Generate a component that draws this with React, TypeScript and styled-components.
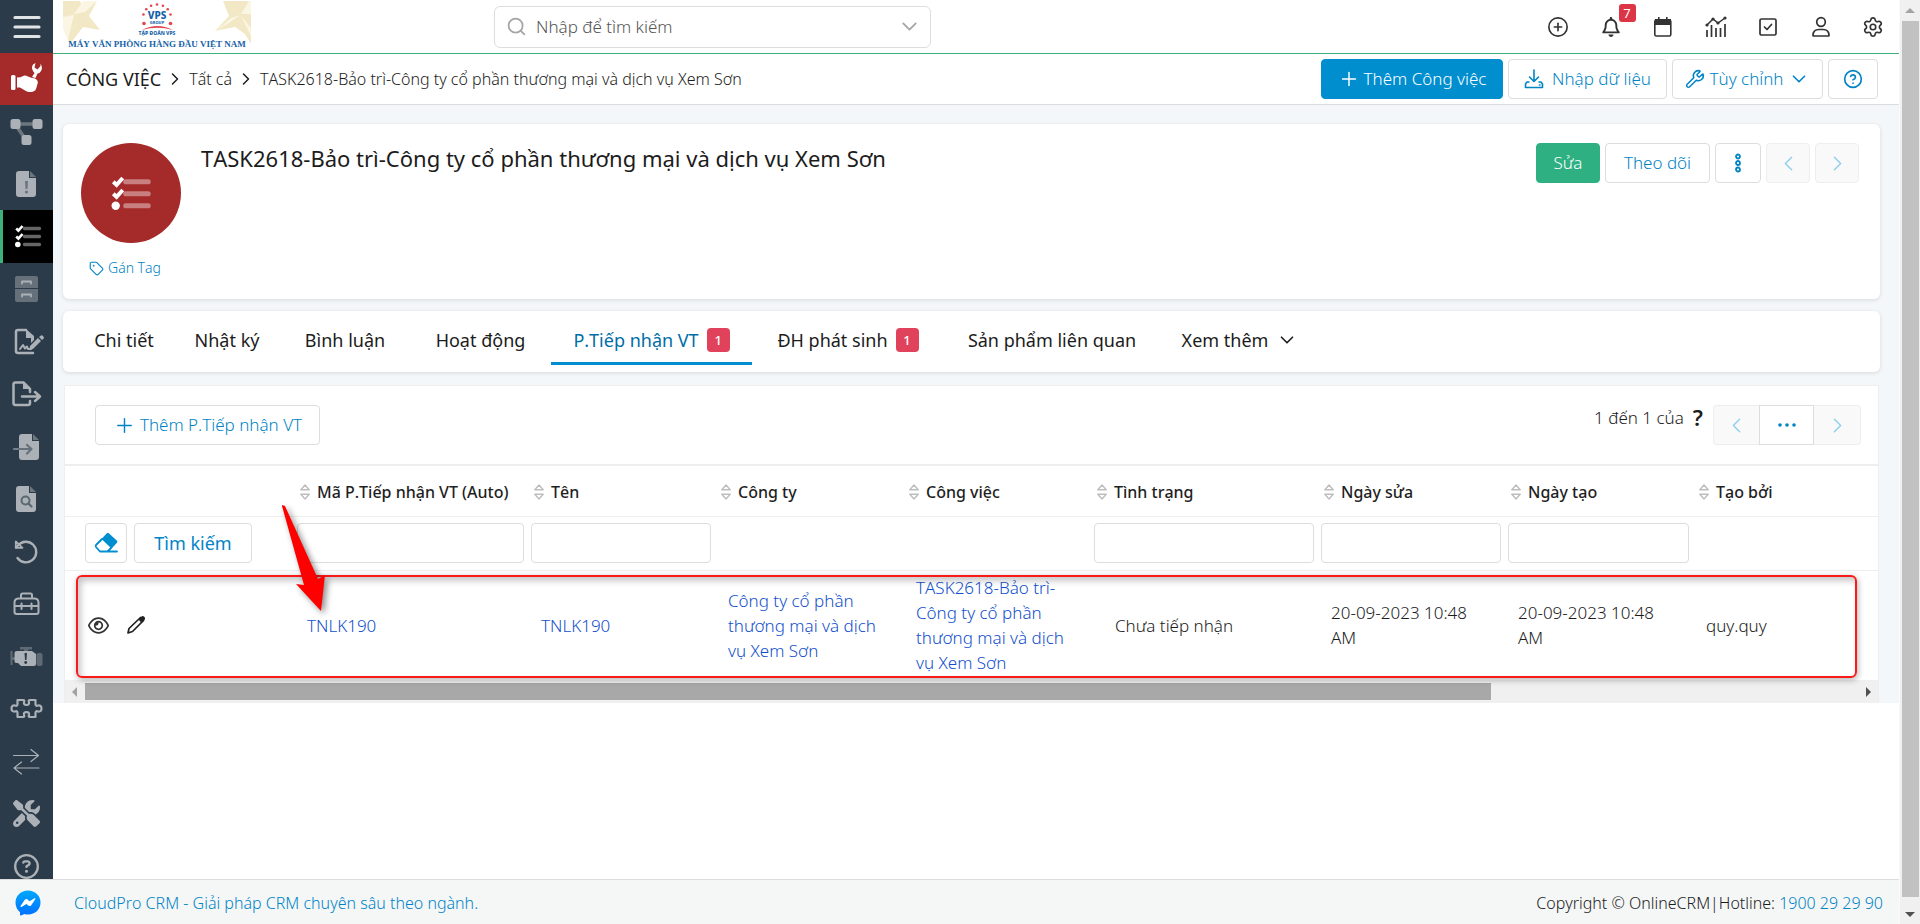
import React from "react";
import styled, { createGlobalStyle, css } from "styled-components";
import {
  ChevronDown,
  ChevronLeft,
  ChevronRight,
  CircleHelp,
  CirclePlus,
  Plus,
  Search,
  Settings,
  Tag,
  Wrench,
} from "lucide-react";
import { FaRegBell, FaRegCircleQuestion, FaRegEye, FaScrewdriverWrench } from "react-icons/fa6";

const color = {
  navy: "#2c3b49",
  red: "#a52a2a",
  green: "#3cb179",
  blue: "#008ecf",
  deepBlue: "#0084c6",
  link: "#1150cc",
  text: "#1c1c1c",
  line: "#dddddd",
  soft: "#eeeeee",
  canvas: "#f3f7fa",
  badge: "#e0425b",
};

const GlobalStyle = createGlobalStyle`
  *, *::before, *::after { box-sizing: border-box; }
  body {
    margin: 0;
    background: #fff;
    color: ${color.text};
    font: 300 16px/24px "Noto Sans", "Open Sans", sans-serif;
    font-kerning: none;
  }
  button, input { font: inherit; font-kerning: none; color: inherit; }
  button { cursor: pointer; }
  a { color: ${color.deepBlue}; text-decoration: none; }
  svg { display: block; flex: none; }
`;

/* ---------- Shell ---------- */

const Shell = styled.div`
  display: grid;
  grid-template: 1fr 45px / 53px 1fr 21px;
  height: 100vh;
  overflow: hidden;
`;

const Sidebar = styled.nav`
  background: ${color.navy};
  overflow: hidden;
  min-height: 0;
`;

const MenuToggle = styled.button`
  display: flex;
  align-items: center;
  justify-content: center;
  width: 100%;
  height: 53px;
  padding: 0;
  border: 0;
  background: none;
`;

const ModuleLink = styled.a`
  display: block;
  height: 52px;
  background: ${color.red};
  color: #fff;
`;

const NavList = styled.ul`
  margin: 0;
  padding: 0;
  list-style: none;
`;

const NavItem = styled.li`
  height: 53px;
  &:nth-child(even) {
    height: 52px;
  }
`;

const NavLink = styled.a<{ $active?: boolean }>`
  display: block;
  height: 100%;
  color: #abb1b6;
  ${(p) =>
    p.$active &&
    css`
      background: #000;
      color: #fff;
      box-shadow: inset 3px 0 ${color.green};
    `}
`;

const Main = styled.main`
  min-width: 0;
  min-height: 0;
  overflow: hidden;
`;

const ScrollRail = styled.div`
  grid-row: 1 / 3;
  grid-column: 3;
  display: flex;
  flex-direction: column;
  align-items: center;
  background: #f0f0f0;
  border-left: 1px solid #fafafa;
`;

const RailEnd = styled.span`
  display: flex;
  align-items: center;
  justify-content: center;
  height: 21px;
`;

const RailThumb = styled.span`
  width: 17px;
  flex: 1;
  margin-bottom: 6px;
  background: #c1c1c1;
`;

/* ---------- Top bar ---------- */

const TopBar = styled.header`
  display: flex;
  align-items: center;
  justify-content: space-between;
  height: 54px;
  padding: 0 14px 0 10px;
  border-bottom: 1px solid ${color.green};
`;

const LogoLink = styled.a`
  align-self: flex-start;
  width: 431px;
`;

const SearchBox = styled.label`
  display: flex;
  align-items: center;
  width: 437px;
  height: 42px;
  padding: 0 8px 0 11px;
  border: 1px solid ${color.line};
  border-radius: 6px;
  color: #a5a5a5;
`;

const SearchInput = styled.input`
  flex: 1;
  min-width: 0;
  margin-left: 9px;
  padding: 0;
  border: 0;
  outline: 0;
  background: none;
  font-size: 17px;
  &::placeholder {
    color: #555;
    opacity: 1;
  }
`;

const TopActions = styled.div`
  display: flex;
  justify-content: space-between;
  width: 339px;
  margin-left: auto;
`;

const IconButton = styled.button`
  position: relative;
  display: flex;
  align-items: center;
  justify-content: center;
  width: 24px;
  height: 24px;
  padding: 0;
  border: 0;
  background: none;
  color: #333;
`;

const Bubble = styled.span`
  position: absolute;
  left: 20px;
  bottom: 17px;
  width: 17px;
  height: 18px;
  border-radius: 3px;
  background: #dc3545;
  color: #fff;
  font-size: 13px;
  font-weight: 400;
  line-height: 18px;
`;

/* ---------- Breadcrumb bar ---------- */

const CrumbBar = styled.div`
  display: flex;
  align-items: center;
  justify-content: space-between;
  height: 51px;
  padding: 0 21px 0 13px;
  border-bottom: 1px solid ${color.line};
`;

const Crumbs = styled.nav`
  display: flex;
  align-items: center;
  gap: 4px;
`;

const CrumbRoot = styled.a`
  color: ${color.text};
  font-size: 18px;
  font-weight: 400;
`;

const Crumb = styled.a`
  color: ${color.text};
`;

const ButtonRow = styled.div`
  display: flex;
  gap: 5px;
`;

type Tone = "plain" | "blue" | "green";

const Button = styled.button<{ $tone?: Tone; $width?: number; $strong?: boolean; $gap?: number }>`
  display: flex;
  align-items: center;
  justify-content: center;
  gap: ${(p) => p.$gap ?? 4}px;
  width: ${(p) => (p.$width ? `${p.$width}px` : "auto")};
  height: 40px;
  padding: 0;
  border: 1px solid ${color.line};
  border-radius: 4px;
  background: #fff;
  color: ${color.deepBlue};
  font-size: ${(p) => (p.$strong ? 18 : 17)}px;
  font-weight: ${(p) => (p.$strong ? 400 : 300)};
  white-space: nowrap;
  ${(p) =>
    p.$tone === "blue" &&
    css`
      border-color: ${color.blue};
      background: ${color.blue};
      color: #fff;
    `}
  ${(p) =>
    p.$tone === "green" &&
    css`
      border-color: #2fb083;
      background: #2fb083;
      color: #fff;
    `}
  &:disabled {
    border-color: ${color.soft};
    background: #f9f9f9;
    color: #8fd0ee;
    cursor: default;
  }
`;

/* ---------- Record ---------- */

const Canvas = styled.div`
  padding: 19px 19px 0 10px;
  background: ${color.canvas};
`;

const Card = styled.section`
  border-radius: 6px;
  background: #fff;
  box-shadow: 0 1px 4px rgba(0, 0, 0, 0.12);
`;

const RecordCard = styled(Card)`
  display: flex;
  align-items: flex-start;
  gap: 20px;
  height: 175px;
  padding: 19px 21px 0 18px;
`;

const RecordMark = styled.div`
  display: flex;
  flex-direction: column;
  gap: 13px;
`;

const Avatar = styled.div`
  display: flex;
  align-items: center;
  justify-content: center;
  width: 100px;
  height: 100px;
  border-radius: 50%;
  background: ${color.red};
  color: #fff;
`;

const TagLink = styled.a`
  display: flex;
  align-items: center;
  gap: 4px;
  padding-left: 8px;
  font-size: 14px;
`;

const RecordTitle = styled.h1`
  flex: 1;
  margin: 0;
  font-size: 22px;
  font-weight: 400;
  line-height: 30px;
`;

const TabCard = styled(Card)`
  display: flex;
  height: 61px;
  margin-top: 12px;
  padding-left: 11px;
`;

const Tab = styled.a<{ $width: number; $active?: boolean }>`
  display: flex;
  align-items: center;
  justify-content: center;
  gap: 8px;
  width: ${(p) => p.$width}px;
  height: 54px;
  padding-top: 6px;
  border-bottom: 3px solid ${(p) => (p.$active ? color.blue : "transparent")};
  color: ${(p) => (p.$active ? "#006ea6" : color.text)};
  font-size: 18px;
  font-weight: 400;
  white-space: nowrap;
`;

const CountBadge = styled.span`
  width: 23px;
  border-radius: 4px;
  background: ${color.badge};
  color: #fff;
  font-size: 13px;
  font-weight: 500;
  line-height: 24px;
  text-align: center;
`;

/* ---------- Related list ---------- */

const Panel = styled.section`
  margin: 13px 1px 0;
  border: 1px solid ${color.soft};
  border-bottom: 0;
  background: #fff;
`;

const PanelBar = styled.div`
  display: flex;
  justify-content: space-between;
  height: 78px;
  padding: 19px 17px 0 30px;
`;

const Pager = styled.div`
  display: flex;
  align-items: flex-start;
`;

const PagerText = styled.span`
  padding: 1px 9px 0 0;
  font-size: 17px;
`;

const PagerTotal = styled.a`
  margin-right: 10px;
  color: ${color.text};
  font-size: 22px;
  font-weight: 600;
`;

const PagerButton = styled(Button)`
  border-radius: 0;
  &:first-child {
    border-radius: 4px 0 0 4px;
    border-right: 0;
  }
  &:last-child {
    border-radius: 0 4px 4px 0;
    border-left: 0;
  }
`;

const PagerGroup = styled.div`
  display: flex;
`;

const TableArea = styled.div`
  position: relative;
`;

const Table = styled.table`
  width: 100%;
  table-layout: fixed;
  border-collapse: collapse;
  border-top: 2px solid ${color.soft};
`;

const Col = styled.col<{ $width?: number }>`
  width: ${(p) => (p.$width ? `${p.$width}px` : "auto")};
`;

const HeadCell = styled.th`
  height: 51px;
  padding: 2px 0 0 6px;
  border-bottom: 1px solid ${color.soft};
  text-align: left;
  font-weight: 500;
  white-space: nowrap;
  color: #1f1f1f;
`;

const SortLabel = styled.span`
  display: flex;
  align-items: center;
  gap: 7px;
`;

const FilterCell = styled.td`
  height: 54px;
  padding: 0 4px 0 3px;
  border-bottom: 1px solid ${color.soft};
`;

const FilterInput = styled.input`
  display: block;
  width: 100%;
  height: 40px;
  padding: 0 10px;
  border: 1px solid ${color.line};
  border-radius: 4px;
  outline: 0;
`;

const FilterActions = styled.div`
  display: flex;
  gap: 7px;
  padding-left: 17px;
`;

const Cell = styled.td<{ $indent?: boolean }>`
  height: 110px;
  padding: 0 20px 0 ${(p) => (p.$indent ? 24 : 13)}px;
  font-size: 17px;
  line-height: 25px;
`;

const RowActions = styled.div`
  display: flex;
  gap: 14px;
  padding-left: 8px;
`;

const CellLink = styled.a`
  color: ${color.link};
`;

const ScrollTrack = styled.div`
  display: flex;
  align-items: center;
  justify-content: space-between;
  height: 23px;
  padding: 0 5px;
  background: #f0f0f0;
`;

const TrackThumb = styled.span`
  width: 78%;
  height: 17px;
  margin-right: auto;
  margin-left: 5px;
  background: #a8a8a8;
`;

const Highlight = styled.div`
  position: absolute;
  inset: 111px 21px 2px 11px;
  border: 2px solid #fa1a1a;
  border-radius: 6px;
  box-shadow: 1px 2px 6px rgba(0, 0, 0, 0.3), inset 3px 4px 6px rgba(0, 0, 0, 0.22);
  pointer-events: none;
`;

const Arrow = styled.svg`
  position: absolute;
  top: 36px;
  left: 211px;
  overflow: visible;
  filter: drop-shadow(3px 3px 3px rgba(0, 0, 0, 0.45));
  pointer-events: none;
`;

/* ---------- Footer ---------- */

const Footer = styled.footer`
  grid-row: 2;
  grid-column: 1 / 3;
  display: flex;
  align-items: center;
  justify-content: space-between;
  padding: 1px 16px 0 15px;
  border-top: 1px solid ${color.line};
  background: #f5f7f7;
`;

const FooterLead = styled.div`
  display: flex;
  align-items: center;
  gap: 33px;
`;

/* ---------- Drawings ---------- */

const NavIcon = ({ children }: { children: React.ReactNode }) => (
  <svg width="53" height="52" viewBox="0 0 53 52" fill="currentColor" aria-hidden="true">
    {children}
  </svg>
);

const line = (width: number) => ({
  fill: "none",
  stroke: "currentColor",
  strokeWidth: width,
  strokeLinecap: "round" as const,
  strokeLinejoin: "round" as const,
});

const ServiceIcon = () => (
  <NavIcon>
    <rect x="11" y="22" width="4.500" height="15" rx="1.500" />
    <path d="M17 24.500Q21 24.500 23 23Q25 22 28 23.500L32 25Q35 24.500 37 27Q38.500 29 37.500 31L36 36Q35 38.500 31 39Q28 39.500 25 37.500L20 34.500H17Z" />
    <path d="M32 24L34.500 20Q30.500 15.500 33 11.500L35.500 10L34.500 14.500L37.500 16.500L40.500 13V10.500Q43 15 41 18Q39.500 20.500 37.500 20.500L35.500 25Z" />
  </NavIcon>
);

const NetworkIcon = () => (
  <NavIcon>
    <path d="M15 19 H38 M15 19 L26 35" {...line(3.5)} opacity=".5" />
    <rect x="10.500" y="14" width="10" height="10" rx="2.500" />
    <rect x="32.500" y="14" width="10" height="10" rx="2.500" />
    <rect x="21.500" y="30" width="10" height="10" rx="2.500" />
  </NavIcon>
);

const FileShape = ({ x = 16, y = 13 }: { x?: number; y?: number }) => (
  <g transform={`translate(${x} ${y})`}>
    <path d="M3 0H13V7H20V23A3 3 0 0 1 17 26H3A3 3 0 0 1 0 23V3A3 3 0 0 1 3 0Z" />
    <path d="M14 0L20 6H14Z" opacity=".5" />
  </g>
);

const FileAlertIcon = () => (
  <NavIcon>
    <FileShape />
    <path d="M25 23H28L27.500 31H25.500Z" fill="#6b7680" />
    <circle cx="26.500" cy="34" r="1.600" fill="#6b7680" />
  </NavIcon>
);

const TaskMarks = ({ dim = 0.4 }: { dim?: number }) => (
  <>
    <path d="M9.500 4.500H24.500M9.500 12.500H24.500M9.500 20.500H24.500" fill="none" stroke="currentColor" strokeWidth="3.400" strokeLinecap="round" opacity={dim} />
    <path d="M1.200 4.500L3.400 6.600L7.500 2M1.200 12.500L3.400 14.600L7.500 10" fill="none" stroke="currentColor" strokeWidth="2.600" />
    <circle cx="2.800" cy="20.500" r="2.800" />
  </>
);

const TasksIcon = () => (
  <NavIcon>
    <g transform="translate(15 14)">
      <TaskMarks />
    </g>
  </NavIcon>
);

const DrawerIcon = () => (
  <NavIcon>
    <path d="M17 13H36A2 2 0 0 1 38 15V25H15V15A2 2 0 0 1 17 13ZM15 26H38V37A2 2 0 0 1 36 39H17A2 2 0 0 1 15 37Z" opacity=".45" />
    <path d="M22 20.500V18.500H31V20.500M22 33.500V31.500H31V33.500" {...line(1.8)} />
  </NavIcon>
);

const SignIcon = () => (
  <NavIcon>
    <path d="M26 15H18A2 2 0 0 0 16 17V36A2 2 0 0 0 18 38H33" {...line(2.5)} />
    <path d="M26 14L34 21V25L31 28V23H26Z" />
    <path d="M20 34L23 30L25 33.500L27 31.500L28 34H31" {...line(2)} />
    <path d="M30 31L38 23L41 26L33 34L29.500 34.500ZM39 22L41 20.500Q42 20 43 21L44 22.500Q44 23.500 42 25Z" />
  </NavIcon>
);

const ExportIcon = () => (
  <NavIcon>
    <path d="M23 14.500H15.500A2 2 0 0 0 13.500 16.500V35A2 2 0 0 0 15.500 37H28A2 2 0 0 0 30 35V33M30 24V21L23.500 14.500" {...line(2.5)} />
    <path d="M23 14V21H31Z" />
    <path d="M22 28.500H39M35 24L40 28.500L35 33" {...line(2.5)} />
  </NavIcon>
);

const ImportIcon = () => (
  <NavIcon>
    <FileShape x={19} y={14} />
    <path d="M14 29H19" {...line(2.2)} opacity=".6" />
    <path d="M19 29H31M27 25L31.500 29L27 33.500" {...line(2.2)} stroke="#66717b" />
  </NavIcon>
);

const FileSearchIcon = () => (
  <NavIcon>
    <FileShape />
    <circle cx="25.500" cy="27.500" r="4" fill="none" stroke="#5b6771" strokeWidth="2" />
    <path d="M28.500 30.500L31.500 33.500" stroke="#5b6771" strokeWidth="2.200" strokeLinecap="round" />
  </NavIcon>
);

const UndoIcon = () => (
  <NavIcon>
    <path d="M17.500 33A10.300 10.300 0 1 0 18 20.500L16 22.500" {...line(2.4)} />
    <path d="M15.800 16.500V22.800H22.500Z" {...line(1.8)} />
  </NavIcon>
);

const ToolboxIcon = () => (
  <NavIcon>
    <path d="M21 20V17A1.500 1.500 0 0 1 22.500 15.500H30.500A1.500 1.500 0 0 1 32 17V20M14.500 28V24A4 4 0 0 1 18 20.500H35A4 4 0 0 1 38.500 24V34A2 2 0 0 1 36.500 36H16.500A2 2 0 0 1 14.500 34V28H38.500M21.500 25.500V31M31.500 25.500V31" {...line(2)} />
  </NavIcon>
);

const EngineIcon = () => (
  <NavIcon>
    <g opacity=".4">
      <path d="M10.500 21H12.500V27H15V30H12.500V35H10.500ZM20 17H32V19.500H28V21H24V19.500H20Z" />
      <rect x="36.500" y="23" width="6" height="13" rx="2" />
    </g>
    <path d="M17 21H32L36 24V34Q36 36 34 36H21L18 33H16Q14.500 33 14.500 31V23Q14.500 21 17 21Z" />
    <path d="M24.500 23H27L26.500 30H25Z" fill={color.navy} />
    <circle cx="25.700" cy="32.500" r="1.400" fill={color.navy} />
  </NavIcon>
);

const PuzzleIcon = () => (
  <NavIcon>
    <path d="M17.500 17H23Q25 17 24 19Q23.500 22 26.500 22Q29.500 22 29 19Q28 17 30 17H35.500V21Q35.500 23.500 38 22.500Q41.500 22 41.500 25.500Q41.500 29 38 28.500Q35.500 27.500 35.500 30V34H30Q28 34 29 32Q29.500 29 26.500 29Q23.500 29 24 32Q25 34 23 34H17.500V30Q17.500 27.500 15 28.500Q11.500 29 11.500 25.500Q11.500 22 15 22.500Q17.500 23.500 17.500 21Z" {...line(2.2)} />
  </NavIcon>
);

const SwapIcon = () => (
  <NavIcon>
    <path d="M13.500 20.500H38.500M31 14.500L38.500 20.500L31 26.500M39 33H14M21.500 27L14 33L21.500 39" {...line(1.2)} />
  </NavIcon>
);

const ToolsIcon = () => (
  <NavIcon>
    <FaScrewdriverWrench x="13" y="12" size={27} />
  </NavIcon>
);

const HelpIcon = () => (
  <NavIcon>
    <FaRegCircleQuestion x="14" y="14" size={25} />
  </NavIcon>
);

const CalendarIcon = () => (
  <svg width="20" height="22" viewBox="0 0 20 22" fill="currentColor">
    <rect x="1.800" y="4" width="16" height="16" rx="1.500" fill="none" stroke="currentColor" strokeWidth="1.600" />
    <path d="M2 3H18V9H2ZM5 1H6.600V4H5ZM13 1H14.600V4H13Z" />
  </svg>
);

const ChartIcon = () => (
  <svg width="22" height="22" viewBox="0 0 22 22" fill="currentColor">
    <path d="M2 9L8 3L13 7L20 2" fill="none" stroke="currentColor" strokeWidth="1.500" />
    <circle cx="2" cy="9" r="1.600" />
    <circle cx="8" cy="3" r="1.600" />
    <circle cx="13" cy="7" r="1.600" />
    <circle cx="20" cy="2" r="1.600" />
    <path d="M2 14V21M6.500 9V21M11 12V21M15.500 12V21M20 8V21" fill="none" stroke="currentColor" strokeWidth="1.700" />
  </svg>
);

const CheckSquareIcon = () => (
  <svg width="20" height="20" viewBox="0 0 20 20" {...line(1.7)}>
    <rect x="2" y="2" width="16" height="16" rx="1.500" />
    <path d="M6.500 10L9 12.500L13.500 7.500" />
  </svg>
);

const UserIcon = () => (
  <svg width="20" height="22" viewBox="0 0 20 22" {...line(1.7)}>
    <circle cx="10" cy="6" r="4.300" />
    <path d="M2 19.500Q2 13.500 8 13.500H12Q18 13.500 18 19.500Q18 20 17.500 20H2.500Q2 20 2 19.500Z" />
  </svg>
);

const ImportDataIcon = () => (
  <svg width="20" height="20" viewBox="0 0 20 20" {...line(1.6)}>
    <path d="M10 1V12M5.500 8L10 12.500L14.500 8M5 13H3L1.500 15V18.500H18.500V15L17 13H15M15.500 16H16" />
  </svg>
);

const MoreVerticalIcon = () => (
  <svg width="8" height="20" viewBox="0 0 8 20" fill="none" stroke="currentColor" strokeWidth="1.800">
    <circle cx="4" cy="3.500" r="2" />
    <circle cx="4" cy="10" r="2" />
    <circle cx="4" cy="16.500" r="2" />
  </svg>
);

const EraserIcon = () => (
  <svg width="24" height="22" viewBox="0 0 24 22" fill={color.blue}>
    <path d="M12.800 1.200Q13.800 .400 14.800 1.200L23 8.800Q23.800 9.800 23 10.800L17.500 16.500L7.500 7Z" />
    <path d="M8 7L2 13Q1.200 14 2 15L6 19.500H23M17.500 15.500L13.500 19.500" {...line(1.8)} stroke={color.blue} />
  </svg>
);

const PencilIcon = () => (
  <svg width="20" height="20" viewBox="0 0 20 20">
    <path d="M2 18L3 13.500L14.500 2.500L17.500 5.500L6.500 16.500Z" fill="none" stroke="#222" strokeWidth="1.700" strokeLinejoin="round" />
    <path d="M12.500 4.500L15.500 1.500Q17 .500 18.500 2Q19.800 3.500 18.500 5L15.500 8Z" fill="#222" />
  </svg>
);

const SortIcon = () => (
  <svg width="10" height="16" viewBox="0 0 10 16" {...line(1.4)} stroke="#bdbdbd">
    <path d="M5 1L9.200 5.800H.800ZM5 15L9.200 10.200H.800Z" />
  </svg>
);

const MessengerIcon = () => (
  <svg width="26" height="26" viewBox="0 0 26 26">
    <defs>
      <linearGradient id="messenger" x1="0" y1="0" x2="0" y2="1">
        <stop offset="0" stopColor="#00a8ff" />
        <stop offset="1" stopColor="#0070ff" />
      </linearGradient>
    </defs>
    <path fill="url(#messenger)" d="M13 .500C20 .500 25.500 5.500 25.500 12.500S20 24.500 13 24.500Q11 24.500 9.500 24L6 25.500Q5 25.700 5 24.800V22.200Q.500 18.500 .500 12.500C.500 5.500 6 .500 13 .500Z" />
    <path fill="#fff" d="M5.500 16L10 9.500Q11 8.500 12.300 9.300L14.500 11.200L19.500 8.300Q20.800 8 20.300 9.300L16 15.500Q15 16.600 13.700 15.700L11.500 13.900L6.400 16.900Q5.200 17.200 5.500 16Z" />
  </svg>
);

const LogoDots = () => (
  <>
    {[-90, -65, -40, -15, -115, -140, -165].map((deg) => {
      const a = (deg * Math.PI) / 180;
      return <circle key={deg} cx={94 + 14 * Math.cos(a)} cy={18 + 13.5 * Math.sin(a)} r="1.300" />;
    })}
    <circle cx="81" cy="23.500" r="1.800" />
    <circle cx="107.500" cy="23.500" r="1.800" />
  </>
);

const Logo = () => (
  <svg width="190" height="50" viewBox="0 0 190 50" role="img" aria-label="VPS Group">
    <g fill="#f3e8c6">
      <path d="M0 1H17L21 10L34 1L26 16L37 30L20 27L7 44L0 28Z" />
      <path d="M160 1H188V44L182 34L172 27L152 31L166 16Z" />
    </g>
    <g fill="#fbf6e4">
      <path d="M11 14L20 1H34L22 12ZM0 17L11 15L5 40L0 28Z" />
      <path d="M178 14L186 1H188V14ZM178 15L153 31L168 18ZM178 16L188 28V36Z" />
    </g>
    <g fill="#e24452">
      <LogoDots />
      <path d="M79 30Q94 22 110 30Q94 25.500 79 30Z" />
    </g>
    <g fill="#1663a8" textAnchor="middle" fontFamily='"Noto Sans", sans-serif' fontWeight="800">
      <text x="94" y="19" fontSize="10">VPS</text>
      <text x="94" y="24" fontSize="4">GROUP</text>
      <text x="94" y="35" fontSize="5">TẬP ĐOÀN VPS</text>
      <text x="94" y="47" fontSize="9" fontWeight="700" fontFamily='"Liberation Serif", serif'>MÁY VĂN PHÒNG HÀNG ĐẦU VIỆT NAM</text>
    </g>
  </svg>
);

const Triangle = ({ dir, fill }: { dir: "up" | "down" | "left" | "right"; fill: string }) => {
  const d = {
    up: "M0 7L5 2L10 7Z",
    down: "M0 3L5 8L10 3Z",
    left: "M7 0L2 5L7 10Z",
    right: "M3 0L8 5L3 10Z",
  }[dir];
  return (
    <svg width="10" height="10" viewBox="0 0 10 10" fill={fill}>
      <path d={d} />
    </svg>
  );
};

/* ---------- Data ---------- */

const navItems: { label: string; icon: React.ReactNode; active?: boolean }[] = [
  { label: "Quy trình", icon: <NetworkIcon /> },
  { label: "Cảnh báo", icon: <FileAlertIcon /> },
  { label: "Công việc", icon: <TasksIcon />, active: true },
  { label: "Kho", icon: <DrawerIcon /> },
  { label: "Hợp đồng", icon: <SignIcon /> },
  { label: "Phiếu xuất", icon: <ExportIcon /> },
  { label: "Phiếu nhập", icon: <ImportIcon /> },
  { label: "Tra cứu", icon: <FileSearchIcon /> },
  { label: "Hoàn trả", icon: <UndoIcon /> },
  { label: "Dụng cụ", icon: <ToolboxIcon /> },
  { label: "Thiết bị", icon: <EngineIcon /> },
  { label: "Linh kiện", icon: <PuzzleIcon /> },
  { label: "Chuyển đổi", icon: <SwapIcon /> },
  { label: "Bảo trì", icon: <ToolsIcon /> },
  { label: "Trợ giúp", icon: <HelpIcon /> },
];

const tabs: { label: string; width: number; count?: number; active?: boolean; more?: boolean }[] = [
  { label: "Chi tiết", width: 100 },
  { label: "Nhật ký", width: 106 },
  { label: "Bình luận", width: 130 },
  { label: "Hoạt động", width: 141 },
  { label: "P.Tiếp nhận VT", width: 201, count: 1, active: true },
  { label: "ĐH phát sinh", width: 192, count: 1 },
  { label: "Sản phẩm liên quan", width: 216 },
  { label: "Xem thêm", width: 160, more: true },
];

const columns: { label: string; width?: number; filter?: boolean }[] = [
  { label: "Mã P.Tiếp nhận VT (Auto)", width: 234, filter: true },
  { label: "Tên", width: 187, filter: true },
  { label: "Công ty", width: 188 },
  { label: "Công việc", width: 188 },
  { label: "Tình trạng", width: 227, filter: true },
  { label: "Ngày sửa", width: 187, filter: true },
  { label: "Ngày tạo", width: 188, filter: true },
  { label: "Tạo bởi" },
];

const company = "Công ty cổ phần thương mại và dịch vụ Xem Sơn";
const taskTitle = `TASK2618-Bảo trì-${company}`;

export default function App() {
  return (
    <>
      <GlobalStyle />
      <Shell>
        <Sidebar aria-label="Menu chính">
          <MenuToggle aria-label="Menu">
            <svg width="28" height="24" viewBox="0 0 28 24" fill="none" stroke="#e1e4e6" strokeWidth="3.200" strokeLinecap="round">
              <path d="M2 2.500H26M2 12H26M2 21.500H26" />
            </svg>
          </MenuToggle>
          <ModuleLink href="#service" aria-label="Dịch vụ">
            <ServiceIcon />
          </ModuleLink>
          <NavList>
            {navItems.map((item) => (
              <NavItem key={item.label}>
                <NavLink href="#nav" aria-label={item.label} $active={item.active}>
                  {item.icon}
                </NavLink>
              </NavItem>
            ))}
          </NavList>
        </Sidebar>

        <Main>
          <TopBar>
            <LogoLink href="#home">
              <Logo />
            </LogoLink>
            <SearchBox>
              <Search size={21} />
              <SearchInput type="text" placeholder="Nhập để tìm kiếm" aria-label="Tìm kiếm" />
              <ChevronDown size={25} strokeWidth={1.7} />
            </SearchBox>
            <TopActions>
              <IconButton aria-label="Thêm nhanh"><CirclePlus size={22} strokeWidth={1.8} /></IconButton>
              <IconButton aria-label="Thông báo">
                <FaRegBell size={20} />
                <Bubble>7</Bubble>
              </IconButton>
              <IconButton aria-label="Lịch"><CalendarIcon /></IconButton>
              <IconButton aria-label="Báo cáo"><ChartIcon /></IconButton>
              <IconButton aria-label="Việc cần làm"><CheckSquareIcon /></IconButton>
              <IconButton aria-label="Tài khoản"><UserIcon /></IconButton>
              <IconButton aria-label="Cài đặt"><Settings size={22} strokeWidth={1.8} /></IconButton>
            </TopActions>
          </TopBar>

          <CrumbBar>
            <Crumbs aria-label="Breadcrumb">
              <CrumbRoot href="#tasks">CÔNG VIỆC</CrumbRoot>
              <ChevronRight size={20} strokeWidth={1.8} />
              <Crumb href="#all">Tất cả</Crumb>
              <ChevronRight size={20} strokeWidth={1.8} />
              <Crumb href="#task">{taskTitle}</Crumb>
            </Crumbs>
            <ButtonRow>
              <Button $tone="blue" $width={182}><Plus size={22} strokeWidth={1.6} />Thêm Công việc</Button>
              <Button $width={159} $gap={8}><ImportDataIcon />Nhập dữ liệu</Button>
              <Button $width={151}><Wrench size={20} strokeWidth={1.8} />Tùy chỉnh<ChevronDown size={22} strokeWidth={1.8} /></Button>
              <Button $width={50} aria-label="Trợ giúp"><CircleHelp size={20} /></Button>
            </ButtonRow>
          </CrumbBar>

          <Canvas>
            <RecordCard>
              <RecordMark>
                <Avatar>
                  <svg width="40" height="36" viewBox="0 0 26 24" fill="currentColor">
                    <TaskMarks />
                  </svg>
                </Avatar>
                <TagLink href="#tag"><Tag size={15} strokeWidth={1.8} />Gán Tag</TagLink>
              </RecordMark>
              <RecordTitle>{taskTitle}</RecordTitle>
              <ButtonRow>
                <Button $tone="green" $width={64}>Sửa</Button>
                <Button $width={105}>Theo dõi</Button>
                <Button $width={46} aria-label="Thêm thao tác"><MoreVerticalIcon /></Button>
                <Button $width={44} disabled aria-label="Trước"><ChevronLeft size={25} strokeWidth={1.4} /></Button>
                <Button $width={44} disabled aria-label="Sau"><ChevronRight size={25} strokeWidth={1.4} /></Button>
              </ButtonRow>
            </RecordCard>

            <TabCard as="nav" aria-label="Mục">
              {tabs.map((tab) => (
                <Tab key={tab.label} href="#tab" $width={tab.width} $active={tab.active}>
                  {tab.label}
                  {tab.count && <CountBadge>{tab.count}</CountBadge>}
                  {tab.more && <ChevronDown size={22} strokeWidth={1.8} />}
                </Tab>
              ))}
            </TabCard>

            <Panel>
              <PanelBar>
                <Button $width={225}><Plus size={23} strokeWidth={1.5} />Thêm P.Tiếp nhận VT</Button>
                <Pager>
                  <PagerText>1 đến 1 của</PagerText>
                  <PagerTotal href="#total">?</PagerTotal>
                  <PagerGroup>
                    <PagerButton $width={46} disabled aria-label="Trang trước"><ChevronLeft size={25} strokeWidth={1.4} /></PagerButton>
                    <PagerButton $width={55} aria-label="Chọn trang">
                      <svg width="18" height="4" viewBox="0 0 18 4" fill="currentColor">
                        <circle cx="2" cy="2" r="1.800" />
                        <circle cx="9" cy="2" r="1.800" />
                        <circle cx="16" cy="2" r="1.800" />
                      </svg>
                    </PagerButton>
                    <PagerButton $width={47} disabled aria-label="Trang sau"><ChevronRight size={25} strokeWidth={1.4} /></PagerButton>
                  </PagerGroup>
                </Pager>
              </PanelBar>

              <TableArea>
                <Table>
                  <colgroup>
                    <Col $width={229} />
                    {columns.map((c) => <Col key={c.label} $width={c.width} />)}
                  </colgroup>
                  <thead>
                    <tr>
                      <HeadCell aria-label="Thao tác" />
                      {columns.map((c) => (
                        <HeadCell key={c.label}>
                          <SortLabel><SortIcon />{c.label}</SortLabel>
                        </HeadCell>
                      ))}
                    </tr>
                  </thead>
                  <tbody>
                    <tr>
                      <FilterCell>
                        <FilterActions>
                          <Button $width={42} aria-label="Xóa bộ lọc"><EraserIcon /></Button>
                          <Button $width={118} $strong>Tìm kiếm</Button>
                        </FilterActions>
                      </FilterCell>
                      {columns.map((c) => (
                        <FilterCell key={c.label}>
                          {c.filter && <FilterInput type="text" aria-label={c.label} />}
                        </FilterCell>
                      ))}
                    </tr>
                    <tr>
                      <Cell>
                        <RowActions>
                          <IconButton as="a" href="#view" aria-label="Xem"><FaRegEye size={21} /></IconButton>
                          <IconButton as="a" href="#edit" aria-label="Sửa"><PencilIcon /></IconButton>
                        </RowActions>
                      </Cell>
                      <Cell><CellLink href="#record">TNLK190</CellLink></Cell>
                      <Cell><CellLink href="#record">TNLK190</CellLink></Cell>
                      <Cell><CellLink href="#company">{company}</CellLink></Cell>
                      <Cell><CellLink href="#task">{taskTitle}</CellLink></Cell>
                      <Cell $indent>Chưa tiếp nhận</Cell>
                      <Cell>20-09-2023 10:48 AM</Cell>
                      <Cell>20-09-2023 10:48 AM</Cell>
                      <Cell>quy.quy</Cell>
                    </tr>
                  </tbody>
                </Table>
                <Highlight />
                <Arrow width="60" height="110" viewBox="0 0 60 110" fill="#fe0000" aria-hidden="true">
                  <path d="M6 5L9 6L42 79L49 75L45 111L20 84L28 85L6 6Z" />
                </Arrow>
              </TableArea>
              <ScrollTrack>
                <Triangle dir="left" fill="#a3a3a3" />
                <TrackThumb />
                <Triangle dir="right" fill="#505050" />
              </ScrollTrack>
            </Panel>
          </Canvas>
        </Main>

        <ScrollRail aria-hidden="true">
          <RailEnd><Triangle dir="up" fill="#a3a3a3" /></RailEnd>
          <RailThumb />
          <RailEnd><Triangle dir="down" fill="#505050" /></RailEnd>
        </ScrollRail>

        <Footer>
          <FooterLead>
            <a href="#messenger" aria-label="Messenger"><MessengerIcon /></a>
            <a href="#cloudpro">CloudPro CRM - Giải pháp CRM chuyên sâu theo ngành.</a>
          </FooterLead>
          <span>Copyright © OnlineCRM|Hotline: <a href="tel:1900292990">1900 29 29 90</a></span>
        </Footer>
      </Shell>
    </>
  );
}
